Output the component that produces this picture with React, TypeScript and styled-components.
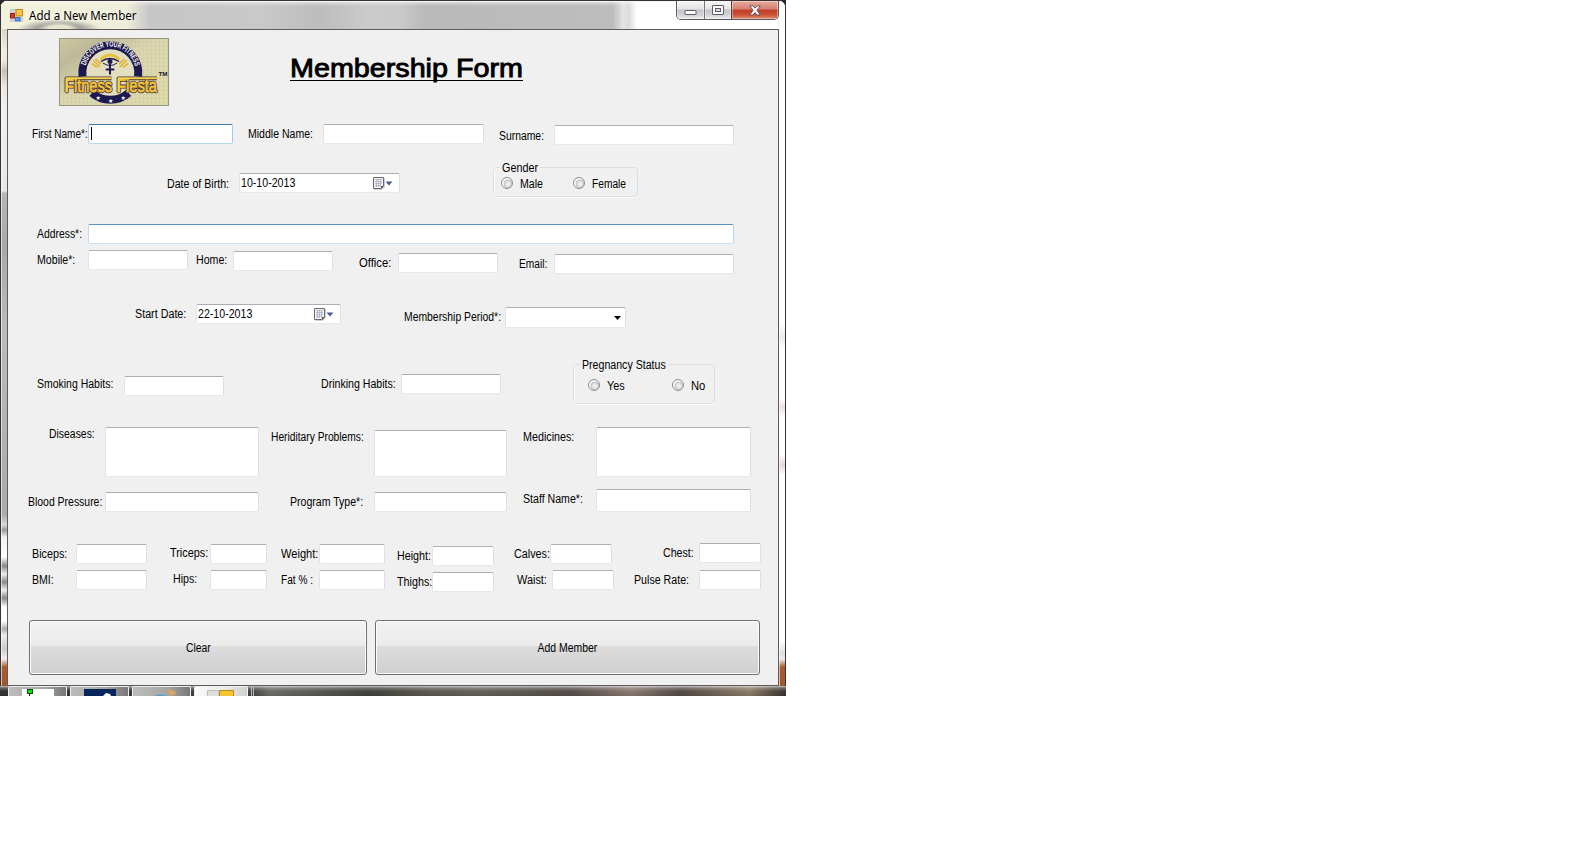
import React, { useLayoutEffect, useRef, useState } from "react";
import styled, { createGlobalStyle, css } from "styled-components";

const GlobalStyle = createGlobalStyle`
  body {
    margin: 0;
    background: #fff;
    font-family: "Liberation Sans", Arial, sans-serif;
    font-size: 12px;
    color: #000;
  }
  * { box-sizing: border-box; }
`;

const Desktop = styled.div`
  width: 786px;
  height: 696px;
  background: #2c2828;
  overflow: hidden;
`;

const Window = styled.section`
  width: 786px;
  height: 686px;
  border: solid #383236;
  border-width: 1px 1px 0;
  border-radius: 7px 7px 0 0;
  overflow: hidden;
  display: flex;
  flex-direction: column;
  background: #fff;
`;

const TitleBar = styled.header`
  height: 28px;
  flex: none;
  display: flex;
  align-items: flex-start;
  padding: 0 6px 0 9px;
  box-shadow: inset 0 1px 0 #f4f4f4, inset 1px 0 0 #eee;
  background:
    radial-gradient(ellipse 22px 7px at 58px 28px, rgba(240, 238, 210, 0.9) 50%, transparent),
    radial-gradient(ellipse 42px 10px at 58px 28px, rgba(110, 110, 118, 0.65) 50%, transparent),
    linear-gradient(90deg, rgba(247, 246, 222, 0.85) 0, rgba(247, 246, 222, 0.8) 125px, transparent 148px),
    linear-gradient(180deg, rgba(255, 255, 255, 0.6), transparent 5px),
    linear-gradient(90deg, #dcdbd0 0, #d0d0ca 110px, #c6c6c6 150px, #c9c9c9 260px, #bdbdbd 320px, #cbcbcb 370px, #c9c9c9 400px, #b9b9b9 425px, #bdbdbd 612px, #e4e4e4 622px, #dcdcdc 628px, #fff 636px);
`;

const TitleText = styled.h1`
  margin: 6px 0 0 6px;
  flex: 1;
  font: 12px/17px "Noto Sans", "Open Sans", sans-serif;
  text-shadow: 0 0 6px #fff;
`;

const AppIcon = styled.svg`
  width: 13px;
  height: 13px;
  margin-top: 8px;
`;

const Controls = styled.div`
  display: flex;
  height: 19px;
  border: 1px solid #5d5860;
  border-top: 0;
  border-radius: 0 0 5px 5px;
  overflow: hidden;
`;

const Control = styled.button<{ $w: number; $close?: boolean }>`
  width: ${(p) => p.$w}px;
  height: 18px;
  padding: 0;
  border: 0;
  border-left: ${(p) => (p.$w === 27 ? "1px solid #77737a" : p.$close ? "1px solid #6c3230" : "0")};
  display: flex;
  align-items: center;
  justify-content: center;
  box-shadow: inset 0 0 0 1px rgba(255, 255, 255, 0.4);
  background: ${(p) =>
    p.$close
      ? "linear-gradient(180deg, #e6aa9e 0, #d68072 8px, #c0402a 9px, #c94b30 13px, #dd8a6a 18px)"
      : "linear-gradient(180deg, #f6f6f7 0, #e2e2e4 8px, #c4c5c9 9px, #d2d3d6 14px, #eceded 18px)"};
`;

const Body = styled.div`
  flex: 1;
  display: flex;
  background: #fff;
`;

const glass = css`
  flex: none;
  box-shadow: inset 1px 0 0 rgba(255, 255, 255, 0.6);
`;

const LeftEdge = styled.div`
  ${glass}
  width: 6px;
  background: linear-gradient(180deg, #d9d8c6 0, #efeedd 22px, #eeeddc 31px, #c9bfb0 42px, #ece8dc 58px, #efefef 80px, #e9e9e9 162px, #b8b5b5 164px, #aaa7a7 220px, #bdbaba 300px, #aaa 485px, #d8d8d8 496px, #999 501px, #f2f2f2 508px, #fff 528px, #888 537px, #eee 545px, #888 553px, #eee 561px, #888 569px, #fff 578px, #fff 592px, #aaa 600px, #eee 606px, #ccc 620px, #f3f0ee 630px, #a95b2e 638px, #a0562c 100%);
`;

const RightEdge = styled.div`
  ${glass}
  width: 6px;
  background: linear-gradient(180deg, #fff 0, #fff 295px, #eee7e8 308px, #fff 320px, #fff 370px, #eadfdf 378px, #fff 388px, #fff 425px, #e6d9d9 436px, #fff 446px, #fff 612px, #dcdcdf 625px, #eee 630px, #a95b2e 638px, #a0562c 100%);
`;

const Client = styled.main`
  width: 772px;
  height: 657px;
  border: 1px solid #5f5b5d;
  background: #f0f0f0;
`;

const Header = styled.div`
  height: 94px;
  padding: 8px 0 0 51px;
  display: flex;
`;

const FormTitle = styled.h2`
  margin: 13px 0 0 121px;
  width: 233px;
  height: 30px;
  border-bottom: 1px solid #000;
  font: normal 26px/34px "Liberation Sans", Arial, sans-serif;
  -webkit-text-stroke: 0.9px #000;
`;

const Row = styled.div<{ $h: number; $after: number; $indent: number; $cols: string }>`
  display: grid;
  grid-template-columns: ${(p) => p.$cols};
  align-items: start;
  height: ${(p) => p.$h}px;
  margin-bottom: ${(p) => p.$after}px;
  padding-left: ${(p) => p.$indent}px;
`;

const Caption = styled.span<{ $drop: number }>`
  display: block;
  height: 14px;
  line-height: 14px;
  margin-top: ${(p) => p.$drop}px;
  white-space: nowrap;
`;

const Glyphs = styled.span<{ $centered?: boolean }>`
  display: inline-block;
  transform-origin: ${(p) => (p.$centered ? "50% 50%" : "0 50%")};
  white-space: nowrap;
`;

/* Condenses a caption so that it fills exactly the given width. */
function Fit({ w, centered, children }: { w: number; centered?: boolean; children: string }) {
  const ref = useRef<HTMLSpanElement>(null);
  const [ratio, setRatio] = useState(1);
  useLayoutEffect(() => {
    if (ref.current) setRatio(w / ref.current.offsetWidth);
  }, [w, children]);
  return (
    <Glyphs ref={ref} $centered={centered} style={{ transform: `scaleX(${ratio})` }}>
      {children}
    </Glyphs>
  );
}

function Label({ w, drop = 0, children }: { w: number; drop?: number; children: string }) {
  return (
    <Caption $drop={drop}>
      <Fit w={w}>{children}</Fit>
    </Caption>
  );
}

const Field = styled.div<{ $w: number; $h?: number; $drop?: number; $active?: "focus" | "hot" }>`
  width: ${(p) => p.$w}px;
  height: ${(p) => p.$h ?? 20}px;
  margin-top: ${(p) => p.$drop ?? 0}px;
  display: flex;
  background: #fff;
  border: 1px solid;
  border-color: ${(p) =>
    p.$active === "focus"
      ? "#3d7bad #a4c9e3 #b7d9ed #b5cfe7"
      : p.$active === "hot"
        ? "#5794bf #b7d5ea #c7e2f1 #c5daed"
        : "#abadb3 #dbdfe6 #e3e9ef #e2e3ea"};
  border-radius: 2px;
`;

const Caret = styled.i`
  width: 1px;
  height: 13px;
  margin: 2px 0 0 2px;
  background: #000;
`;

const DateText = styled.span<{ $drop: number }>`
  flex: 1;
  height: 14px;
  line-height: 14px;
  margin: ${(p) => p.$drop}px 0 0 1px;
`;

const Calendar = styled.svg`
  width: 22px;
  height: 14px;
  margin: 2px 5px 0 0;
`;

const ComboArrow = styled.svg`
  width: 7px;
  height: 4px;
  margin: 8px 4px 0 auto;
`;

const GroupBox = styled.fieldset<{ $w: number; $h: number }>`
  width: ${(p) => p.$w}px;
  height: ${(p) => p.$h}px;
  min-width: 0;
  margin: 0;
  padding: 0;
  border: 1px solid #d5dfe5;
  border-radius: 4px;
  box-shadow: 0 1px 0 #fff, inset 1px 0 0 #fff;
`;

const Legend = styled.legend<{ $w: number }>`
  width: ${(p) => p.$w}px;
  height: 13px;
  line-height: 14px;
  margin-left: 6px;
  padding: 0 0 0 2px;
  white-space: nowrap;
`;

const Options = styled.div<{ $pad: string; $second: number }>`
  display: grid;
  grid-template-columns: ${(p) => p.$second}px auto;
  padding: ${(p) => p.$pad};
`;

const Option = styled.label`
  display: flex;
  gap: 7px;
  height: 14px;
  line-height: 14px;
`;

const Radio = styled.i`
  flex: none;
  width: 12px;
  height: 12px;
  border: 1px solid #8e8f8f;
  border-radius: 50%;
  background: radial-gradient(circle at 60% 60%, #f4f5f6 0, #dfe2e5 2.5px, #b9bec4 4px, #f4f4f4 4.6px);
`;

const Buttons = styled.div`
  display: grid;
  grid-template-columns: 338px 385px;
  gap: 8px;
  padding-left: 21px;
`;

const PushButton = styled.button`
  height: 55px;
  padding: 0;
  border: 1px solid #707070;
  border-radius: 3px;
  box-shadow: inset 0 0 0 1px #fcfcfc;
  background: linear-gradient(180deg, #f2f2f2 0, #ebebeb 47%, #dddddd 47%, #cfcfcf 100%);
  font: 12px/14px "Liberation Sans", Arial, sans-serif;
  color: #000;
`;

const Taskbar = styled.footer`
  height: 10px;
  display: flex;
  gap: 3px;
  padding-left: 8px;
  background:
    linear-gradient(180deg, rgba(235, 235, 235, 0.75) 0, rgba(200, 200, 200, 0.35) 2px, transparent 5px, rgba(0, 0, 0, 0.12) 100%),
    linear-gradient(90deg, #333 0, #444 250px, #6f706a 270px, #454440 370px, #5e5d54 430px, #66645c 480px, #574f4c 570px, #8d7e74 632px, #554c4a 680px, #8e8068 750px, #3b3532 786px);
`;

const Task = styled.div<{ $w: number; $light?: boolean }>`
  width: ${(p) => p.$w}px;
  border: solid #efefef;
  border-width: 1px 1px 0;
  border-radius: 2px 2px 0 0;
  display: flex;
  justify-content: center;
  background: ${(p) =>
    p.$light
      ? "linear-gradient(90deg, #fafafa, #e9e9e9 60%, #cfcfcf)"
      : "linear-gradient(90deg, #bcbcbc, #a8a6a5 60%, #777)"};
  svg { width: 32px; height: 7px; margin-top: 2px; }
`;

const TaskDivider = styled.i`
  width: 3px;
  border: solid #bbb;
  border-width: 0 1px;
`;

const LogoArt = styled.svg`
  width: 110px;
  height: 68px;
  flex: none;
`;

function Logo() {
  return (
    <LogoArt viewBox="0 0 110 68">
      <defs>
        <linearGradient id="paper" x1="0" y1="0" x2="1" y2="1">
          <stop offset="0" stopColor="#cfcba6" />
          <stop offset=".2" stopColor="#bcb89a" />
          <stop offset=".45" stopColor="#dad6b2" />
          <stop offset="1" stopColor="#dfdbab" />
        </linearGradient>
        <linearGradient id="gold" x1="0" y1="0" x2="0" y2="1">
          <stop offset="0" stopColor="#fbe568" />
          <stop offset="1" stopColor="#dca52e" />
        </linearGradient>
        <pattern id="weave" width="4" height="4" patternUnits="userSpaceOnUse">
          <path d="M0 .5H4M.5 0V4" stroke="#c4c08f" strokeWidth=".5" opacity=".5" />
        </pattern>
        <path id="motto" d="M25.9 34A25.4 25.4 0 0 1 76.700 34" />
      </defs>
      <rect width="110" height="68" fill="url(#paper)" />
      <rect width="110" height="68" fill="url(#weave)" />
      <circle cx="51.3" cy="34" r="24" fill="#e2dfc0" />
      <path d="M23.5 38.5A28 28 0 1 1 79.1 38.5" fill="none" stroke="#1d1850" strokeWidth="8" />
      <path d="M33 55A28 28 0 0 0 69.6 55" fill="none" stroke="#1d1850" strokeWidth="8" />
      <text fontFamily="Liberation Sans" fontWeight="700" fontSize="7.8" fill="#fffdf0">
        <textPath href="#motto" startOffset="6.5" textLength="67" lengthAdjust="spacingAndGlyphs">
          DISCOVER YOUR FITNESS
        </textPath>
      </text>
      <path d="M41.500 21.500Q51 12.500 60.500 21.500" fill="none" stroke="#e8c03a" strokeWidth="3" />
      <path d="M42 23.5Q51 17.500 60 23.500" fill="none" stroke="#1d1850" strokeWidth="1.300" />
      <path d="M44 25Q51 30 58 25" fill="none" stroke="#1d1850" strokeWidth="1" />
      <circle cx="51" cy="23.500" r="2.500" fill="#1d1850" />
      <path d="M51 26V36.5M46.7 31.5H55.3" stroke="#1d1850" strokeWidth="2" />
      <path d="M34 22L41 29M36.5 21L42 26M33 25.5L38 29.5M68 22L61 29M65.5 21L60 26M69 25.5L64 29.5" stroke="#e3b43a" strokeWidth="1.7" />
      <g fontFamily="Liberation Sans" fontWeight="400" fontSize="17.5" strokeLinejoin="round">
        <g stroke="#46333a" strokeWidth="2.600" fill="#46333a">
          <text x="6" y="54" textLength="47" lengthAdjust="spacingAndGlyphs">Fitness</text>
          <text x="58" y="54" textLength="40" lengthAdjust="spacingAndGlyphs">Fiesta</text>
          <path d="M7.500 54V40.300H52.500M59.500 54V40.300H98" fill="none" strokeWidth="3.800" />
        </g>
        <g fill="#efc23c" stroke="#efc23c" strokeWidth=".8">
          <text x="6" y="54" textLength="47" lengthAdjust="spacingAndGlyphs">Fitness</text>
          <text x="58" y="54" textLength="40" lengthAdjust="spacingAndGlyphs">Fiesta</text>
          <path d="M7.500 54V40.300H52.500M59.500 54V40.300H98" fill="none" stroke="#f3d24c" strokeWidth="2" />
        </g>
      </g>
      <g fontFamily="DejaVu Sans" fontSize="6" fill="#fff">
        <text x="36.5" y="61.5">★</text>
        <text x="49" y="64.5">★</text>
        <text x="61.5" y="61.5">★</text>
      </g>
      <text x="99.5" y="38" fontFamily="Liberation Sans" fontWeight="700" fontSize="6" textLength="9" lengthAdjust="spacingAndGlyphs" fill="#15122e">TM</text>
      <rect x=".5" y=".5" width="109" height="67" fill="none" stroke="#99957c" />
    </LogoArt>
  );
}

function DateField({ w, drop, textDrop, value }: { w: number; drop: number; textDrop: number; value: string }) {
  return (
    <Field $w={w} $drop={drop}>
      <DateText $drop={textDrop}>
        <Fit w={54}>{value}</Fit>
      </DateText>
      <Calendar viewBox="0 0 22 14">
        <path d="M2 13.2H10L12.2 11V2" fill="none" stroke="#bbb" />
        <path d="M1.5 1.5H11.5V10L9.5 12.5H1.5Z" fill="#f2f2f4" stroke="#6d6869" />
        <path d="M3 3.5H10M3 5.5H10M3 7.5H10M3 9.5H9M4.5 3V11M6.5 3V11M8.5 3V11" stroke="#aab4c8" strokeWidth=".8" />
        <path d="M9 12.5V10H11.5Z" fill="#555" />
        <path d="M13.500 5.500H20.500L17 9.500Z" fill="#4a5e8c" />
      </Calendar>
    </Field>
  );
}

function RadioOption({ w, children }: { w: number; children: string }) {
  return (
    <Option>
      <Radio />
      <Fit w={w}>{children}</Fit>
    </Option>
  );
}

export default function App() {
  return (
    <>
      <GlobalStyle />
      <Desktop>
        <Window>
          <TitleBar>
            <AppIcon viewBox="0 0 13 13">
              <path d="M.5 .5H6V3.5H.5ZM.5 10H5V12.5H.5ZM10.5 9H12.5V12.5H10.5Z" fill="#d5d5d5" stroke="#bbb" strokeWidth=".6" />
              <rect x="6" y=".5" width="6.5" height="6.5" fill="#f7c63e" stroke="#c08a1c" />
              <rect x=".5" y="4.5" width="4" height="4.5" fill="#d13b2b" stroke="#9c2216" />
              <rect x="5.5" y="8.5" width="4.5" height="3.5" fill="#5d9cf0" stroke="#3873c9" />
            </AppIcon>
            <TitleText>
              <Fit w={108}>Add a New Member</Fit>
            </TitleText>
            <Controls>
              <Control $w={27.5} aria-label="Minimize">
                <svg width="13" height="14" viewBox="0 0 13 14">
                  <rect x="1" y="7.5" width="11" height="4" rx=".5" fill="#fff" stroke="#5b5868" />
                </svg>
              </Control>
              <Control $w={27} aria-label="Maximize">
                <svg width="12" height="12" viewBox="0 0 12 12">
                  <rect x=".5" y="1.5" width="11" height="9" rx=".5" fill="#fff" stroke="#5b5868" />
                  <rect x="3.5" y="4.5" width="5" height="3" fill="#ddd" stroke="#5b5868" />
                </svg>
              </Control>
              <Control $w={47} $close aria-label="Close">
                <svg width="12" height="11" viewBox="0 0 12 11">
                  <path d="M.8 .8H4L6 3.2L8 .8H11.2L8 5.3L11.2 10H8L6 7.5L4 10H.8L4 5.3Z" fill="#fff" stroke="#5a4a58" strokeWidth=".9" />
                </svg>
              </Control>
            </Controls>
          </TitleBar>

          <Body>
            <LeftEdge />
            <Client>
              <Header>
                <Logo />
                <FormTitle>
                  <Fit w={233}>Membership Form</Fit>
                </FormTitle>
              </Header>

              <Row $h={21} $after={16} $indent={24} $cols="56px 160px 75px 176px 55px 1fr">
                <Label w={56} drop={3}>First Name*:</Label>
                <Field $w={145} $active="focus"><Caret /></Field>
                <Label w={65} drop={3}>Middle Name:</Label>
                <Field $w={161} />
                <Label w={45} drop={5}>Surname:</Label>
                <Field $w={180} $drop={1} />
              </Row>

              <Row $h={37} $after={26} $indent={159} $cols="72px 254px 1fr">
                <Label w={62} drop={16}>Date of Birth:</Label>
                <DateField w={161} drop={12} textDrop={2} value="10-10-2013" />
                <GroupBox $w={145} $h={36}>
                  <Legend $w={40}><Fit w={36}>Gender</Fit></Legend>
                  <Options $pad="3px 0 0 7px" $second={72}>
                    <RadioOption w={23}>Male</RadioOption>
                    <RadioOption w={34}>Female</RadioOption>
                  </Options>
                </GroupBox>
              </Row>

              <Row $h={20} $after={6} $indent={29} $cols="51px 1fr">
                <Label w={45} drop={3}>Address*:</Label>
                <Field $w={646} $active="hot" />
              </Row>

              <Row $h={24} $after={30} $indent={29} $cols="51px 108px 37px 126px 39px 121px 35px 1fr">
                <Label w={38} drop={3}>Mobile*:</Label>
                <Field $w={100} />
                <Label w={31} drop={3}>Home:</Label>
                <Field $w={100} $drop={1} />
                <Label w={32} drop={6}>Office:</Label>
                <Field $w={100} $drop={3} />
                <Label w={28} drop={7}>Email:</Label>
                <Field $w={180} $drop={4} />
              </Row>

              <Row $h={24} $after={30} $indent={127} $cols="61px 208px 101px 1fr">
                <Label w={51} drop={3}>Start Date:</Label>
                <DateField w={145} drop={0} textDrop={2} value="22-10-2013" />
                <Label w={97} drop={6}>Membership Period*:</Label>
                <Field $w={121} $h={21} $drop={3}>
                  <ComboArrow viewBox="0 0 7 4"><path d="M0 0H7L3.5 4Z" /></ComboArrow>
                </Field>
              </Row>

              <Row $h={47} $after={22} $indent={29} $cols="87px 197px 80px 172px 1fr">
                <Label w={76} drop={19}>Smoking Habits:</Label>
                <Field $w={100} $drop={18} />
                <Label w={75} drop={19}>Drinking Habits:</Label>
                <Field $w={100} $drop={16} />
                <GroupBox $w={142} $h={46}>
                  <Legend $w={88}><Fit w={84}>Pregnancy Status</Fit></Legend>
                  <Options $pad="8px 0 0 14px" $second={84}>
                    <RadioOption w={18}>Yes</RadioOption>
                    <RadioOption w={14}>No</RadioOption>
                  </Options>
                </GroupBox>
              </Row>

              <Row $h={50} $after={12} $indent={41} $cols="56px 166px 103px 149px 73px 1fr">
                <Label w={46}>Diseases:</Label>
                <Field $w={154} $h={50} />
                <Label w={93} drop={3}>Heriditary Problems:</Label>
                <Field $w={133} $h={47} $drop={3} />
                <Label w={51} drop={3}>Medicines:</Label>
                <Field $w={155} $h={50} />
              </Row>

              <Row $h={23} $after={31} $indent={20} $cols="77px 185px 84px 149px 73px 1fr">
                <Label w={74} drop={6}>Blood Pressure:</Label>
                <Field $w={154} $drop={3} />
                <Label w={73} drop={6}>Program Type*:</Label>
                <Field $w={133} $drop={3} />
                <Label w={60} drop={3}>Staff Name*:</Label>
                <Field $w={155} $h={23} />
              </Row>

              <Row $h={23} $after={4} $indent={24} $cols="44px 94px 40px 71px 38px 78px 35px 82px 36px 113px 36px 1fr">
                <Label w={35} drop={4}>Biceps:</Label>
                <Field $w={71} $drop={1} />
                <Label w={38} drop={3}>Triceps:</Label>
                <Field $w={57} $drop={1} />
                <Label w={37} drop={4}>Weight:</Label>
                <Field $w={66} $drop={1} />
                <Label w={34} drop={6}>Height:</Label>
                <Field $w={62} $drop={3} />
                <Label w={36} drop={4}>Calves:</Label>
                <Field $w={62} $drop={1} />
                <Label w={31} drop={3}>Chest:</Label>
                <Field $w={62} />
              </Row>

              <Row $h={22} $after={28} $indent={24} $cols="44px 97px 37px 71px 38px 78px 35px 85px 35px 82px 65px 1fr">
                <Label w={22} drop={3}>BMI:</Label>
                <Field $w={71} />
                <Label w={24} drop={2}>Hips:</Label>
                <Field $w={57} />
                <Label w={32} drop={3}>Fat % :</Label>
                <Field $w={66} />
                <Label w={35} drop={5}>Thighs:</Label>
                <Field $w={62} $drop={2} />
                <Label w={30} drop={3}>Waist:</Label>
                <Field $w={62} />
                <Label w={55} drop={3}>Pulse Rate:</Label>
                <Field $w={62} />
              </Row>

              <Buttons>
                <PushButton><Fit w={25} centered>Clear</Fit></PushButton>
                <PushButton><Fit w={60} centered>Add Member</Fit></PushButton>
              </Buttons>
            </Client>
            <RightEdge />
          </Body>
        </Window>

        <Taskbar>
          <Task $w={59}>
            <svg viewBox="0 0 32 7">
              <rect width="32" height="7" fill="#fff" />
              <rect x="5.5" y=".5" width="5" height="4" fill="#0be60b" stroke="#064d06" />
              <path d="M7.5 5V7" stroke="#111" />
            </svg>
          </Task>
          <Task $w={59}>
            <svg viewBox="0 0 32 7">
              <rect width="32" height="7" fill="#04265a" />
              <path d="M19 7L22 4L26 5L27 7Z" fill="#fff" />
            </svg>
          </Task>
          <Task $w={59}>
            <svg viewBox="0 0 32 7">
              <path d="M8 7Q15 3.500 21 7Z" fill="#54a3c4" />
              <path d="M22 1Q29 0 30 5L24 7Z" fill="#d7a366" />
            </svg>
          </Task>
          <Task $w={54} $light>
            <svg viewBox="0 0 32 7">
              <path d="M2.500 7V1.500H14V7" fill="#ddd" stroke="#bbb" />
              <path d="M14.500 7V1.500H28.500V7" fill="#f5c531" stroke="#b98812" />
            </svg>
          </Task>
          <TaskDivider />
        </Taskbar>
      </Desktop>
    </>
  );
}
